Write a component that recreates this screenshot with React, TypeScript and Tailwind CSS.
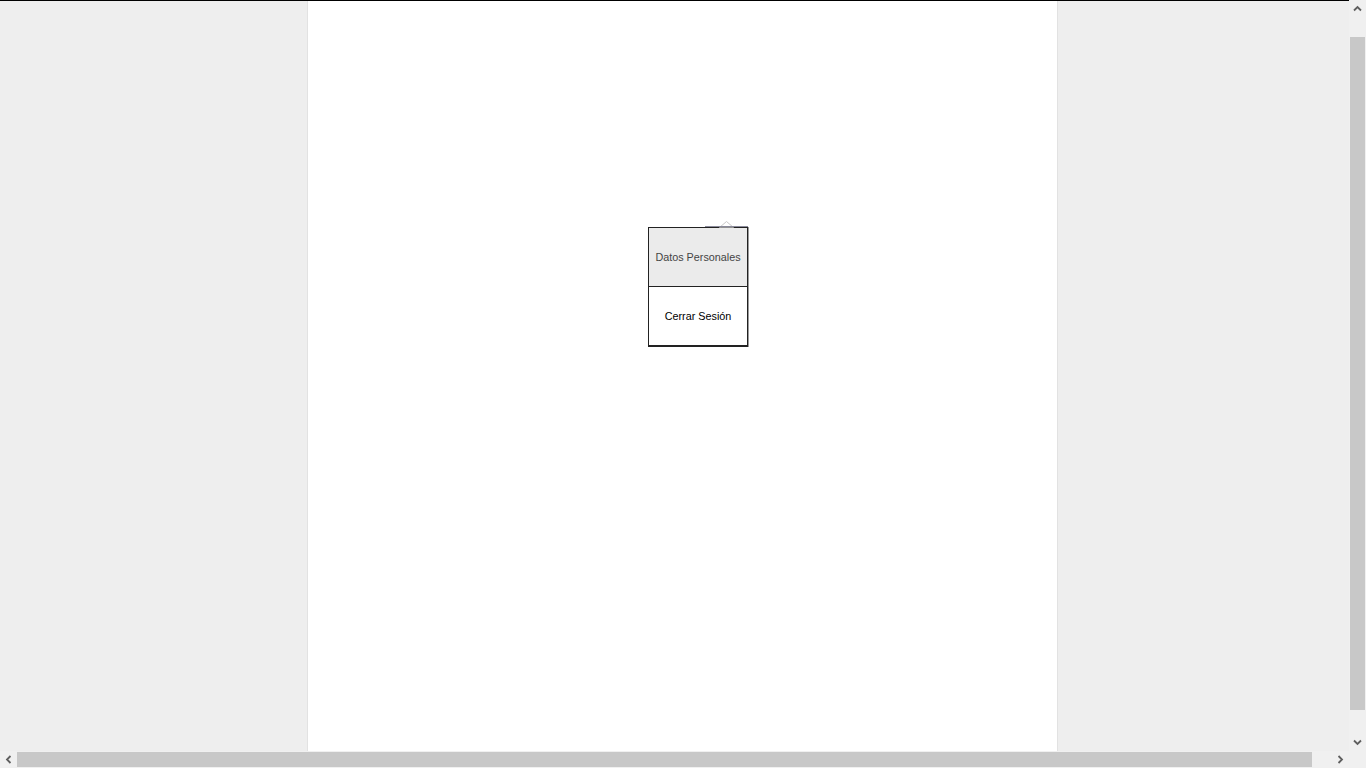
import React from "react";

function Chevron({ dir }: { dir: "up" | "down" | "left" | "right" }) {
  const rot = { up: 0, right: 90, down: 180, left: 270 }[dir];
  return (
    <svg width="9" height="9" viewBox="0 0 9 9" style={{ transform: `rotate(${rot}deg)` }}>
      <path d="M1 6.5 L4.5 3 L8 6.5" fill="none" stroke="#5f5f5f" strokeWidth="1.8" />
    </svg>
  );
}

export default function App() {
  return (
    <div className="flex h-[768px] w-[1366px] flex-col overflow-hidden bg-[#eeeeee]" style={{ fontFamily: '"Liberation Sans", Arial, sans-serif' }}>
      <div className="flex h-[751px]">
        <div className="flex h-[751px] w-[1349px] flex-col">
          <div className="h-px w-full bg-black" />
          <div className="flex flex-1">
            <div className="w-[307px]" />
            <div className="w-[751px] border-x border-[#e2e2e2] bg-white">
              <div className="ml-[340px] mt-[220px] w-[100px]">
                <div className="relative h-[6px]">
                  <svg className="absolute left-[71px] top-0" width="15" height="7" viewBox="0 0 15 7">
                    <path d="M0.5 6.5 L7.5 0.5 L14.5 6.5" fill="white" stroke="#c8c8c8" strokeWidth="1" />
                  </svg>
                  <div className="absolute bottom-0 left-[57px] h-px w-[43px] bg-[#8a8a9a]" />
                </div>
                <div className="border border-b-2 border-[#222] shadow-[1px_0_0_#9a9a9a]">
                  <div className="flex h-[58px] items-center justify-center bg-[#ebebeb] text-[10.8px] text-[#444]">
                    Datos Personales
                  </div>
                  <div className="flex h-[59px] items-center justify-center border-t border-[#222] bg-white pt-px text-[10.8px] text-black">
                    Cerrar Sesión
                  </div>
                </div>
              </div>
            </div>
            <div className="flex-1" />
          </div>
        </div>
        <div className="flex w-[17px] flex-col bg-[#f0f0f0]">
          <div className="flex h-[17px] items-center justify-center"><Chevron dir="up" /></div>
          <div className="h-[20px]" />
          <div className="mx-px h-[673px] bg-[#c8c8c8]" />
          <div className="flex-1" />
          <div className="flex h-[17px] items-center justify-center"><Chevron dir="down" /></div>
        </div>
      </div>
      <div className="flex h-[17px] bg-[#f0f0f0]">
        <div className="flex w-[17px] items-center justify-center"><Chevron dir="left" /></div>
        <div className="my-px w-[1295px] bg-[#c8c8c8]" />
        <div className="flex-1" />
        <div className="flex w-[17px] items-center justify-center"><Chevron dir="right" /></div>
        <div className="w-[17px]" />
      </div>
    </div>
  );
}
